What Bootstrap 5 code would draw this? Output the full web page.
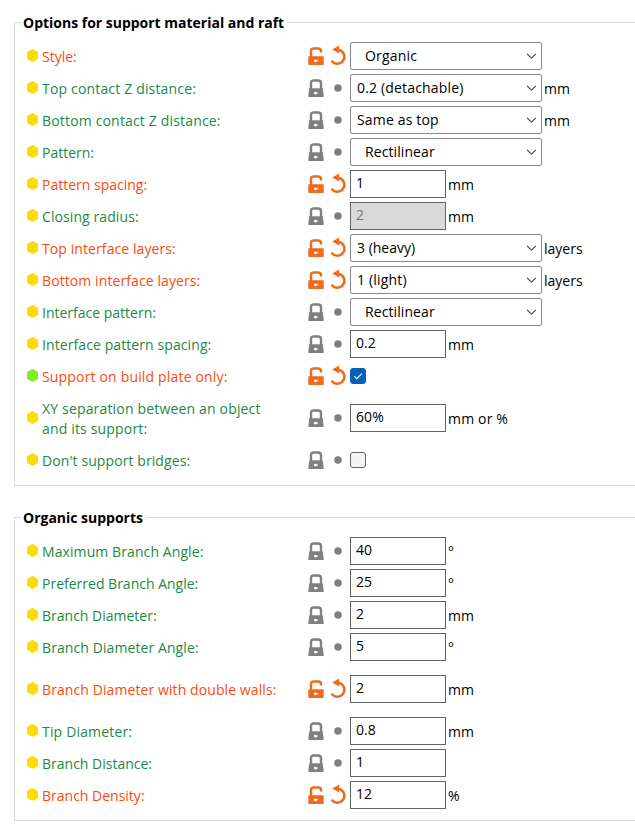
<!DOCTYPE html>
<html lang="en">
<head>
<meta charset="utf-8">
<title>Support material settings</title>
<link href="https://cdn.jsdelivr.net/npm/bootstrap@5.3.0/dist/css/bootstrap.min.css" rel="stylesheet">
<style>
body{font-family:"Open Sans","Noto Sans",sans-serif;font-size:14px;line-height:20px;color:#000;background:#fff;overflow:hidden}
.group{margin-left:14px;border:1px solid #dcdcdc;border-right:0;padding:17px 0 9px 12px}
.group.first{margin-top:22px;height:464px}
.group.second{margin-top:31px;height:304px}
.group-title{left:6px;top:-10px;background:#fff;padding:0 3px 0 2px;font-weight:700;white-space:nowrap;letter-spacing:-.01px}
.opt{height:32px}
.opt.tall{height:52px}
.hex{width:11px;height:13px;color:#ffdc00;margin:-1px 4px 0 0;flex:none}
.hex.simple{color:#7def23}
.name{width:266px;color:#1c8a42;flex:none;padding-top:2px}
.wide{letter-spacing:.17px}
.roomy{letter-spacing:.09px}
.mod .name{color:#fb4b10}
.lock,.state{color:#808080;flex:none;overflow:visible}
.mod .lock,.mod .state{color:#ed6b21}
.lock{width:16px;height:20px;margin-right:6px}
.state{width:16px;height:20px;margin-right:4px}
.box{width:96px;height:28px;border:1px solid #646464;border-radius:0;padding:0 5px;font-size:14px;color:#000;line-height:24px;flex:none}
.box.off{background:#d9d9d9;color:#777}
.combo{width:192px;height:28px;border:1px solid #8a8a8a;border-radius:2px;padding:0 4px 0 6px;line-height:26px;flex:none}
.combo.indent{padding-left:14px}
.chev{width:11px;height:7px;color:#555}
.unit{margin:2px 0 0 2px;white-space:nowrap}
.tick{width:16px;height:16px;border:1px solid #666;border-radius:3px;background:#f3f3f3;flex:none}
.tick.on{background:#0560b6;border-color:#0560b6;color:#fff}
</style>
<script src="https://cdn.jsdelivr.net/npm/bootstrap@5.3.0/dist/js/bootstrap.bundle.min.js"></script>
</head>
<body>
<svg class="d-none">
<symbol id="hex" viewBox="0 0 11 13"><path fill="currentColor" d="M5.5 0 11 3.1V9.9L5.5 13 0 9.9V3.1z"/></symbol>
<symbol id="closed" viewBox="0 0 16 20"><path d="M3 11V5.2Q3 2.5 5.7 2.5H10.3Q13 2.5 13 5.2V11" fill="none" stroke="currentColor" stroke-width="2.4"/><path fill="currentColor" d="M1.3 10.3H14.7L15.7 17.4Q15.8 19 14.7 19H1.3Q.2 19 .3 17.4z"/><path fill="#fff" d="M7.4 13.7 10.6 15 7.4 16.5A1.5 1.4 0 1 1 7.4 13.7z"/></symbol>
<symbol id="open" viewBox="0 0 16 20"><path d="M3 12V5.2Q3 2.5 5.7 2.5H10.3Q13 2.5 13 5.2V6.5" fill="none" stroke="currentColor" stroke-width="2.5"/><path fill="currentColor" d="M1.2 10.3H14.8Q15.7 10.3 15.7 11.3V18Q15.7 19 14.8 19H1.2Q.3 19 .3 18V11.3Q.3 10.3 1.2 10.3z"/><path fill="#fff" d="M7.4 13.4 10.6 14.7 7.4 16.2A1.5 1.4 0 1 1 7.4 13.4z"/></symbol>
<symbol id="undo" viewBox="0 0 16 20" overflow="visible"><path d="M8 3.7A7 7 0 1 1 1.6 14.6" fill="none" stroke="currentColor" stroke-width="2.5"/><path fill="currentColor" d="M2.2 3.5 9.2-.6V7.6z"/></symbol>
<symbol id="dot" viewBox="0 0 16 20"><circle cx="8" cy="10" r="3.8" fill="currentColor"/></symbol>
<symbol id="chev" viewBox="0 0 11 7"><path d="M1.2 1 5.5 5.2 9.8 1" fill="none" stroke="currentColor" stroke-width="1.1"/></symbol>
<symbol id="check" viewBox="0 0 14 14"><path d="M3.2 7.2 5.8 9.7 10.8 4.6" fill="none" stroke="currentColor" stroke-width="1.1"/></symbol>
</svg>

<section class="group first position-relative">
<div class="group-title position-absolute">Options for support material and raft</div>
<div class="opt mod d-flex align-items-center"><svg class="hex"><use href="#hex"/></svg><div class="name">Style:</div><svg class="lock"><use href="#open"/></svg><svg class="state"><use href="#undo"/></svg><div class="combo indent wide d-flex align-items-center justify-content-between"><span>Organic</span><svg class="chev"><use href="#chev"/></svg></div></div>
<div class="opt d-flex align-items-center"><svg class="hex"><use href="#hex"/></svg><div class="name wide">Top contact Z distance:</div><svg class="lock"><use href="#closed"/></svg><svg class="state"><use href="#dot"/></svg><div class="combo wide d-flex align-items-center justify-content-between"><span>0.2 (detachable)</span><svg class="chev"><use href="#chev"/></svg></div><span class="unit">mm</span></div>
<div class="opt d-flex align-items-center"><svg class="hex"><use href="#hex"/></svg><div class="name wide">Bottom contact Z distance:</div><svg class="lock"><use href="#closed"/></svg><svg class="state"><use href="#dot"/></svg><div class="combo wide d-flex align-items-center justify-content-between"><span>Same as top</span><svg class="chev"><use href="#chev"/></svg></div><span class="unit">mm</span></div>
<div class="opt d-flex align-items-center"><svg class="hex"><use href="#hex"/></svg><div class="name">Pattern:</div><svg class="lock"><use href="#closed"/></svg><svg class="state"><use href="#dot"/></svg><div class="combo indent roomy d-flex align-items-center justify-content-between"><span>Rectilinear</span><svg class="chev"><use href="#chev"/></svg></div></div>
<div class="opt mod d-flex align-items-center"><svg class="hex"><use href="#hex"/></svg><div class="name">Pattern spacing:</div><svg class="lock"><use href="#open"/></svg><svg class="state"><use href="#undo"/></svg><div class="box">1</div><span class="unit">mm</span></div>
<div class="opt d-flex align-items-center"><svg class="hex"><use href="#hex"/></svg><div class="name roomy">Closing radius:</div><svg class="lock"><use href="#closed"/></svg><svg class="state"><use href="#dot"/></svg><div class="box off">2</div><span class="unit">mm</span></div>
<div class="opt mod d-flex align-items-center"><svg class="hex"><use href="#hex"/></svg><div class="name roomy">Top interface layers:</div><svg class="lock"><use href="#open"/></svg><svg class="state"><use href="#undo"/></svg><div class="combo d-flex align-items-center justify-content-between"><span>3 (heavy)</span><svg class="chev"><use href="#chev"/></svg></div><span class="unit">layers</span></div>
<div class="opt mod d-flex align-items-center"><svg class="hex"><use href="#hex"/></svg><div class="name roomy">Bottom interface layers:</div><svg class="lock"><use href="#open"/></svg><svg class="state"><use href="#undo"/></svg><div class="combo wide d-flex align-items-center justify-content-between"><span>1 (light)</span><svg class="chev"><use href="#chev"/></svg></div><span class="unit">layers</span></div>
<div class="opt d-flex align-items-center"><svg class="hex"><use href="#hex"/></svg><div class="name">Interface pattern:</div><svg class="lock"><use href="#closed"/></svg><svg class="state"><use href="#dot"/></svg><div class="combo indent roomy d-flex align-items-center justify-content-between"><span>Rectilinear</span><svg class="chev"><use href="#chev"/></svg></div></div>
<div class="opt d-flex align-items-center"><svg class="hex"><use href="#hex"/></svg><div class="name roomy">Interface pattern spacing:</div><svg class="lock"><use href="#closed"/></svg><svg class="state"><use href="#dot"/></svg><div class="box">0.2</div><span class="unit">mm</span></div>
<div class="opt mod d-flex align-items-center"><svg class="hex simple"><use href="#hex"/></svg><div class="name wide">Support on build plate only:</div><svg class="lock"><use href="#open"/></svg><svg class="state"><use href="#undo"/></svg><div class="tick on d-flex"><svg width="14" height="14"><use href="#check"/></svg></div></div>
<div class="opt tall d-flex align-items-center"><svg class="hex"><use href="#hex"/></svg><div class="name wide">XY separation between an object<br>and its support:</div><svg class="lock"><use href="#closed"/></svg><svg class="state"><use href="#dot"/></svg><div class="box roomy">60%</div><span class="unit wide">mm or %</span></div>
<div class="opt d-flex align-items-center"><svg class="hex"><use href="#hex"/></svg><div class="name roomy">Don't support bridges:</div><svg class="lock"><use href="#closed"/></svg><svg class="state"><use href="#dot"/></svg><div class="tick"></div></div>
</section>

<section class="group second position-relative">
<div class="group-title position-absolute">Organic supports</div>
<div class="opt d-flex align-items-center"><svg class="hex"><use href="#hex"/></svg><div class="name roomy">Maximum Branch Angle:</div><svg class="lock"><use href="#closed"/></svg><svg class="state"><use href="#dot"/></svg><div class="box">40</div><span class="unit">°</span></div>
<div class="opt d-flex align-items-center"><svg class="hex"><use href="#hex"/></svg><div class="name">Preferred Branch Angle:</div><svg class="lock"><use href="#closed"/></svg><svg class="state"><use href="#dot"/></svg><div class="box">25</div><span class="unit">°</span></div>
<div class="opt d-flex align-items-center"><svg class="hex"><use href="#hex"/></svg><div class="name">Branch Diameter:</div><svg class="lock"><use href="#closed"/></svg><svg class="state"><use href="#dot"/></svg><div class="box">2</div><span class="unit">mm</span></div>
<div class="opt d-flex align-items-center"><svg class="hex"><use href="#hex"/></svg><div class="name roomy">Branch Diameter Angle:</div><svg class="lock"><use href="#closed"/></svg><svg class="state"><use href="#dot"/></svg><div class="box">5</div><span class="unit">°</span></div>
<div class="opt tall mod d-flex align-items-center"><svg class="hex"><use href="#hex"/></svg><div class="name roomy">Branch Diameter with double walls:</div><svg class="lock"><use href="#open"/></svg><svg class="state"><use href="#undo"/></svg><div class="box">2</div><span class="unit">mm</span></div>
<div class="opt d-flex align-items-center"><svg class="hex"><use href="#hex"/></svg><div class="name wide">Tip Diameter:</div><svg class="lock"><use href="#closed"/></svg><svg class="state"><use href="#dot"/></svg><div class="box">0.8</div><span class="unit">mm</span></div>
<div class="opt d-flex align-items-center"><svg class="hex"><use href="#hex"/></svg><div class="name">Branch Distance:</div><svg class="lock"><use href="#closed"/></svg><svg class="state"><use href="#dot"/></svg><div class="box">1</div></div>
<div class="opt mod d-flex align-items-center"><svg class="hex"><use href="#hex"/></svg><div class="name">Branch Density:</div><svg class="lock"><use href="#open"/></svg><svg class="state"><use href="#undo"/></svg><div class="box">12</div><span class="unit">%</span></div>
</section>
</body>
</html>
